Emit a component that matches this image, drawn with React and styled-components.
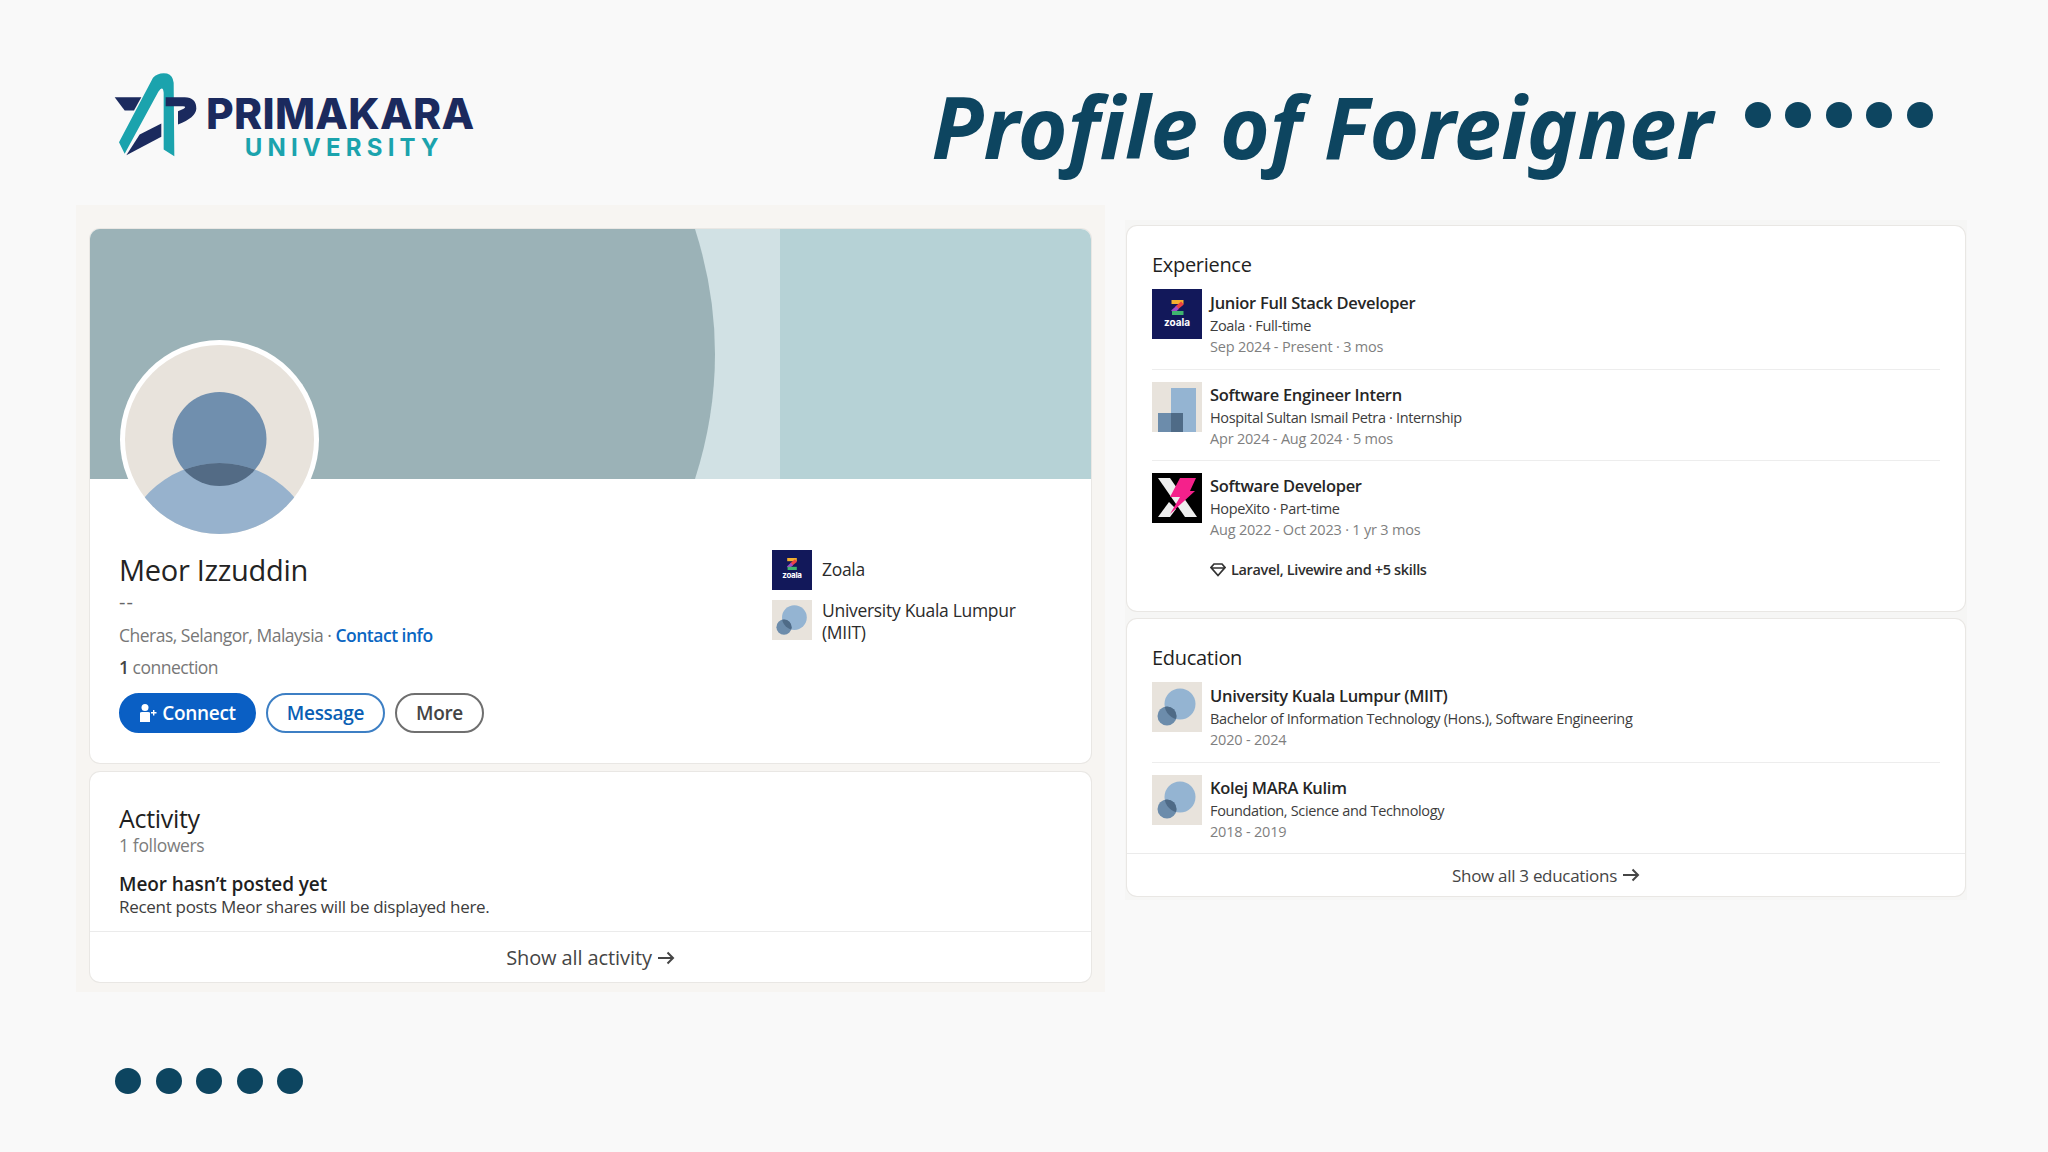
import React from "react";
import styled, { createGlobalStyle } from "styled-components";

const GlobalStyle = createGlobalStyle`
    html, body {
        margin: 0;
        padding: 0;
        background-color: #f9f9f9;
    }
    * {
        box-sizing: border-box;
    }
`;

const UI_FONT = `"Open Sans", "Noto Sans", sans-serif`;

const Page = styled.div`
    width: 2048px;
    height: 1152px;
    overflow: hidden;
    display: flex;
    flex-direction: column;
    background-color: #f9f9f9;
    font-family: ${UI_FONT};
    color: #1f1f1f;
`;

const Header = styled.header`
    height: 205px;
    flex: none;
    display: flex;
    justify-content: space-between;
    padding: 71px 115px 0 113px;
`;

const Brand = styled.div`
    display: flex;
    gap: 8px;
    height: 90px;
`;

const BrandWords = styled.div`
    display: flex;
    flex-direction: column;
    align-items: center;
    padding-top: 22px;
`;

const BrandName = styled.div`
    font-family: "Inter", sans-serif;
    font-weight: 800;
    font-size: 42.5px;
    line-height: 41px;
    letter-spacing: 0.3px;
    color: #1b2a5e;
`;

const BrandSub = styled.div`
    font-family: "Inter", sans-serif;
    font-weight: 700;
    font-size: 24px;
    line-height: 28px;
    letter-spacing: 5.2px;
    margin-left: 8px;
    color: #1ba3ad;
`;

const TitleGroup = styled.div`
    display: flex;
    gap: 32px;
`;

const Title = styled.h1`
    margin: 0;
    font-family: "Noto Sans", sans-serif;
    font-style: italic;
    font-weight: 700;
    font-size: 85.3px;
    line-height: 110px;
    color: #0d4560;
    white-space: nowrap;
`;

const Dots = styled.div`
    display: flex;
    gap: 14.6px;
    margin-top: ${props => props.top || 0}px;
    margin-left: ${props => props.left || 0}px;
`;

const Dot = styled.span`
    width: 26px;
    height: 26px;
    border-radius: 50%;
    background-color: #0d4560;
`;

const Columns = styled.main`
    display: flex;
    align-items: flex-start;
    gap: 20px;
    padding-left: 76px;
`;

const LeftPanel = styled.section`
    width: 1029px;
    padding: 24px 14px 10px 14px;
    display: flex;
    flex-direction: column;
    gap: 9px;
    background-color: #f7f5f2;
`;

const RightPanel = styled.section`
    width: 842px;
    margin-top: 15px;
    padding: 6px 2px 4px 2px;
    display: flex;
    flex-direction: column;
    gap: 8px;
    background-color: #f6f6f5;
`;

const Card = styled.div`
    position: relative;
    background-color: #fff;
    border-radius: 10px;
    overflow: hidden;
    box-shadow: 0 0 0 1px #e9e7e4;
`;

const Banner = styled.div`
    height: 250px;
    line-height: 0;
`;

const AvatarWrap = styled.div`
    position: absolute;
    left: 30px;
    top: 111px;
    width: 199px;
    height: 199px;
`;

const ProfileBody = styled.div`
    display: flex;
    justify-content: space-between;
    padding: 71px 22px 30px 29px;
`;

const ProfileMain = styled.div`
    display: flex;
    flex-direction: column;
`;

const Name = styled.div`
    font-size: 29px;
    line-height: 40px;
    letter-spacing: -0.3px;
    color: #232323;
`;

const Tagline = styled.div`
    font-size: 20px;
    line-height: 22px;
    margin-top: 1px;
    letter-spacing: 1px;
    color: #666;
`;

const MetaLine = styled.div`
    font-size: 17.5px;
    line-height: 24px;
    margin-top: ${props => props.top || 0}px;
    letter-spacing: -0.5px;
    color: #777;
`;

const ContactLink = styled.span`
    color: #0a66c2;
    font-weight: 600;
`;

const Strong = styled.span`
    color: #444;
    font-weight: 600;
`;

const Buttons = styled.div`
    display: flex;
    gap: 10px;
    margin-top: 13.5px;
`;

const Pill = styled.div`
    height: 40px;
    display: flex;
    align-items: center;
    justify-content: center;
    gap: 5px;
    width: ${props => props.width}px;
    border-radius: 20px;
    font-size: 19px;
    font-weight: 600;
    letter-spacing: -0.3px;
    color: ${props => props.color};
    background-color: ${props => props.fill || "#fff"};
    border: 2px solid ${props => props.line};
`;

const Affiliations = styled.div`
    width: 297px;
    display: flex;
    flex-direction: column;
    gap: 10px;
`;

const Affiliation = styled.div`
    display: flex;
    align-items: ${props => props.top ? "flex-start" : "center"};
    gap: 10px;
    font-size: 17.5px;
    line-height: 21.5px;
    font-weight: 500;
    letter-spacing: -0.3px;
    color: #2b2b2b;
`;

const ActivityHead = styled.div`
    padding: 30px 29px 0 29px;
`;

const CardTitle = styled.div`
    font-size: ${props => props.size}px;
    font-weight: 500;
    line-height: 32px;
    letter-spacing: -0.3px;
    color: #1f1f1f;
`;

const Followers = styled.div`
    font-size: 17.5px;
    line-height: 22px;
    letter-spacing: -0.35px;
    color: #7c7c7c;
`;

const EmptyTitle = styled.div`
    margin-top: 16px;
    font-size: 19px;
    line-height: 24px;
    font-weight: 600;
    letter-spacing: -0.1px;
    color: #1f1f1f;
`;

const EmptyText = styled.div`
    font-size: 17px;
    line-height: 22px;
    letter-spacing: -0.3px;
    color: #3d3d3d;
`;

const ShowAll = styled.div`
    height: ${props => props.height}px;
    margin-top: ${props => props.top || 0}px;
    padding-top: ${props => props.drop || 0}px;
    display: flex;
    align-items: center;
    justify-content: center;
    gap: 6px;
    border-top: 1px solid #ebebeb;
    font-size: ${props => props.size}px;
    font-weight: 500;
    letter-spacing: ${props => props.spacing}px;
    color: #454545;
`;

const ListCard = styled.div`
    padding: 23px 25px 0 25px;
`;

const ListTitle = styled(CardTitle)`
    margin-bottom: 8px;
`;

const Row = styled.div`
    display: flex;
    gap: 8px;
    height: ${props => props.height}px;
    padding-top: ${props => props.first ? 0 : 12}px;
    border-top: ${props => props.first ? "none" : "1px solid #ededed"};
`;

const RowText = styled.div`
    display: flex;
    flex-direction: column;
    padding-top: ${props => props.first ? 1.5 : 1}px;
`;

const RowTitle = styled.div`
    font-size: 16.5px;
    line-height: 24px;
    font-weight: 600;
    letter-spacing: -0.3px;
    color: #262626;
`;

const RowSub = styled.div`
    font-size: 14.5px;
    line-height: 21px;
    letter-spacing: -0.35px;
    color: #3d3d3d;
`;

const RowDate = styled.div`
    font-size: 14.5px;
    line-height: 21px;
    letter-spacing: -0.2px;
    color: #7f7f7f;
`;

const Skills = styled.div`
    display: flex;
    align-items: center;
    gap: 5px;
    margin-top: 20px;
    font-size: 14.5px;
    line-height: 20px;
    font-weight: 600;
    letter-spacing: -0.35px;
    color: #2e2e2e;
`;

const Tile = styled.div`
    width: ${props => props.size}px;
    height: ${props => props.size}px;
    flex: none;
    display: flex;
    flex-direction: column;
    align-items: center;
    justify-content: center;
    line-height: 0;
    background-color: ${props => props.fill};
`;

const ZoalaWord = styled.span`
    font-family: "Inter", sans-serif;
    font-weight: 700;
    font-size: ${props => props.size * 0.2}px;
    line-height: ${props => props.size * 0.28}px;
    color: #fff;
`;

function LogoMark() {
    return (
        <svg width="85" height="87" viewBox="70 65 255 260">
            <path fill="#1ba3ad" d="M88 278 L190 85 Q205 68 232 72 Q250 78 252 100 L254 320 L222 300 L222 130 Q220 105 206 127 L105 313 Z" />
            <path fill="#1b2a5e" d="M75 143 H155 L133 183 H105 Z" />
            <path fill="#1b2a5e" d="M228 143 H285 Q320 143 320 178 Q318 205 265 225 V185 L282 178 Q292 170 280 170 H228 Z" />
            <path fill="#1b2a5e" d="M110 317 L150 255 L215 222 V262 Z" />
        </svg>
    );
}

function BannerArt() {
    return (
        <svg width="1001" height="250" viewBox="0 0 1001 250">
            <rect width="1001" height="250" fill="#b6d2d6" />
            <rect x="560" width="130" height="250" fill="#d1e1e4" />
            <path fill="#9bb2b7" d="M0 0 H605 Q645 125 605 250 H0 Z" />
        </svg>
    );
}

function AvatarArt() {
    return (
        <svg width="199" height="199" viewBox="0 0 199 199">
            <defs>
                <clipPath id="face"><circle cx="99.5" cy="99.5" r="94.5" /></clipPath>
                <clipPath id="head"><circle cx="99.5" cy="99" r="47" /></clipPath>
            </defs>
            <circle cx="99.5" cy="99.5" r="99.5" fill="#fff" />
            <g clipPath="url(#face)">
                <rect width="199" height="199" fill="#e8e3dc" />
                <circle cx="99.5" cy="99" r="47" fill="#708fae" />
                <circle cx="99.5" cy="222" r="99" fill="#97b2cd" />
                <circle cx="99.5" cy="222" r="99" fill="#536b85" clipPath="url(#head)" />
            </g>
        </svg>
    );
}

function ZoalaLogo({size}) {
    const s = size * 0.3;
    return (
        <Tile size={size} fill="#12185a">
            <svg width={s} height={s} viewBox="0 0 30 30">
                <path d="M3 4 H27" stroke="#f4b12f" strokeWidth="8" />
                <path d="M25 6 L13 16" stroke="#ec4144" strokeWidth="8" />
                <path d="M15 15 L5 24" stroke="#a04bc8" strokeWidth="8" />
                <path d="M4 26 H27" stroke="#3fb56f" strokeWidth="8" />
            </svg>
            <ZoalaWord size={size}>zoala</ZoalaWord>
        </Tile>
    );
}

function SchoolLogo({size, id}) {
    return (
        <Tile size={size} fill="#e8e3dc">
            <svg width={size} height={size} viewBox="0 0 50 50">
                <defs>
                    <clipPath id={id}><circle cx="28" cy="22" r="15.5" /></clipPath>
                </defs>
                <circle cx="28" cy="22" r="15.5" fill="#94b4d2" />
                <circle cx="15" cy="34" r="9.5" fill="#6c8cab" />
                <circle cx="15" cy="34" r="9.5" fill="#4f6b87" clipPath={`url(#${id})`} />
            </svg>
        </Tile>
    );
}

function HospitalLogo({size}) {
    return (
        <Tile size={size} fill="#e8e3dc">
            <svg width={size} height={size} viewBox="0 0 50 50">
                <rect x="19" y="6" width="25" height="44" fill="#94b4d2" />
                <rect x="6" y="31" width="25" height="19" fill="#6c8cab" />
                <rect x="19" y="31" width="12" height="19" fill="#4f6b87" />
            </svg>
        </Tile>
    );
}

function HopeXitoLogo({size}) {
    return (
        <Tile size={size} fill="#000">
            <svg width={size} height={size} viewBox="0 0 50 50">
                <path fill="#eeeeee" d="M6 5 H18 L45 44 H33 Z" />
                <path fill="#eeeeee" d="M6 44 L17 29 L24 36 L18 44 Z" />
                <path fill="#f5218b" d="M28 5 H44 L38 18 H43 L18 41 L28 24 H18 Z" />
            </svg>
        </Tile>
    );
}

function ConnectIcon() {
    return (
        <svg width="18" height="20" viewBox="0 0 18 20" fill="#fff">
            <circle cx="6" cy="4.5" r="3.5" />
            <path d="M1 10 Q1 9 3 9 H9 Q11 9 11 10 V19 H1 Z" />
            <path d="M12 9 H14 V7 H15.4 V9 H17.5 V10.4 H15.4 V12.5 H14 V10.4 H12 Z" />
        </svg>
    );
}

function ArrowIcon() {
    return (
        <svg width="17" height="14" viewBox="0 0 17 14" fill="none" stroke="#454545" strokeWidth="2">
            <path d="M0 7 H15 M9.5 1.5 L15 7 L9.5 12.5" />
        </svg>
    );
}

function GemIcon() {
    return (
        <svg width="16" height="14" viewBox="0 0 16 14" fill="none" stroke="#333" strokeWidth="1.7">
            <path d="M4 1 H12 L15 4.5 L8 12.5 L1 4.5 Z M1.5 5 H14.5" />
        </svg>
    );
}

const experience = [
    {id: "zoala", title: "Junior Full Stack Developer", sub: "Zoala · Full-time", date: "Sep 2024 - Present · 3 mos"},
    {id: "hospital", title: "Software Engineer Intern", sub: "Hospital Sultan Ismail Petra · Internship", date: "Apr 2024 - Aug 2024 · 5 mos"},
    {id: "hopexito", title: "Software Developer", sub: "HopeXito · Part-time", date: "Aug 2022 - Oct 2023 · 1 yr 3 mos", skills: "Laravel, Livewire and +5 skills"},
];

const education = [
    {title: "University Kuala Lumpur (MIIT)", sub: "Bachelor of Information Technology (Hons.), Software Engineering", date: "2020 - 2024"},
    {title: "Kolej MARA Kulim", sub: "Foundation, Science and Technology", date: "2018 - 2019"},
];

function PickLogo({id}) {
    if (id === "zoala") {
        return <ZoalaLogo size={50} />;
    }
    if (id === "hospital") {
        return <HospitalLogo size={50} />;
    }
    return <HopeXitoLogo size={50} />;
}

export default function App() {
    return (
        <Page>
            <GlobalStyle />
            <Header>
                <Brand>
                    <LogoMark />
                    <BrandWords>
                        <BrandName>PRIMAKARA</BrandName>
                        <BrandSub>UNIVERSITY</BrandSub>
                    </BrandWords>
                </Brand>
                <TitleGroup>
                    <Title>Profile of Foreigner</Title>
                    <Dots top={31}>
                        {[0, 1, 2, 3, 4].map(i => <Dot key={i} />)}
                    </Dots>
                </TitleGroup>
            </Header>
            <Columns>
                <LeftPanel>
                    <Card>
                        <Banner><BannerArt /></Banner>
                        <AvatarWrap><AvatarArt /></AvatarWrap>
                        <ProfileBody>
                            <ProfileMain>
                                <Name>Meor Izzuddin</Name>
                                <Tagline>--</Tagline>
                                <MetaLine top={10}>
                                    Cheras, Selangor, Malaysia · <ContactLink>Contact info</ContactLink>
                                </MetaLine>
                                <MetaLine top={8}><Strong>1</Strong> connection</MetaLine>
                                <Buttons>
                                    <Pill width={137} color="#fff" fill="#0a5fc4" line="#0a5fc4">
                                        <ConnectIcon />Connect
                                    </Pill>
                                    <Pill width={119} color="#0a5fb4" line="#3d7fc4">Message</Pill>
                                    <Pill width={89} color="#444" line="#6f6f6f">More</Pill>
                                </Buttons>
                            </ProfileMain>
                            <Affiliations>
                                <Affiliation>
                                    <ZoalaLogo size={40} />
                                    Zoala
                                </Affiliation>
                                <Affiliation top>
                                    <SchoolLogo size={40} id="school-top" />
                                    <span>University Kuala Lumpur<br />(MIIT)</span>
                                </Affiliation>
                            </Affiliations>
                        </ProfileBody>
                    </Card>
                    <Card>
                        <ActivityHead>
                            <CardTitle size={25}>Activity</CardTitle>
                            <Followers>1 followers</Followers>
                            <EmptyTitle>Meor hasn’t posted yet</EmptyTitle>
                            <EmptyText>Recent posts Meor shares will be displayed here.</EmptyText>
                        </ActivityHead>
                        <ShowAll height={51} top={13} drop={2} size={20} spacing={-0.1}>Show all activity <ArrowIcon /></ShowAll>
                    </Card>
                </LeftPanel>
                <RightPanel>
                    <Card>
                        <ListCard>
                            <ListTitle size={20}>Experience</ListTitle>
                            {experience.map((item, i) => (
                                <Row key={item.id} first={i === 0} height={item.skills ? 151 : (i === 0 ? 80 : 91)}>
                                    <PickLogo id={item.id} />
                                    <RowText first={i === 0}>
                                        <RowTitle>{item.title}</RowTitle>
                                        <RowSub>{item.sub}</RowSub>
                                        <RowDate>{item.date}</RowDate>
                                        {item.skills && <Skills><GemIcon />{item.skills}</Skills>}
                                    </RowText>
                                </Row>
                            ))}
                        </ListCard>
                    </Card>
                    <Card>
                        <ListCard>
                            <ListTitle size={20}>Education</ListTitle>
                            {education.map((item, i) => (
                                <Row key={item.title} first={i === 0} height={i === 0 ? 80 : 91}>
                                    <SchoolLogo size={50} id={`school-${i}`} />
                                    <RowText first={i === 0}>
                                        <RowTitle>{item.title}</RowTitle>
                                        <RowSub>{item.sub}</RowSub>
                                        <RowDate>{item.date}</RowDate>
                                    </RowText>
                                </Row>
                            ))}
                        </ListCard>
                        <ShowAll height={43} size={17} spacing={-0.3}>Show all 3 educations <ArrowIcon /></ShowAll>
                    </Card>
                </RightPanel>
            </Columns>
            <Dots top={76} left={115}>
                {[0, 1, 2, 3, 4].map(i => <Dot key={i} />)}
            </Dots>
        </Page>
    );
}
